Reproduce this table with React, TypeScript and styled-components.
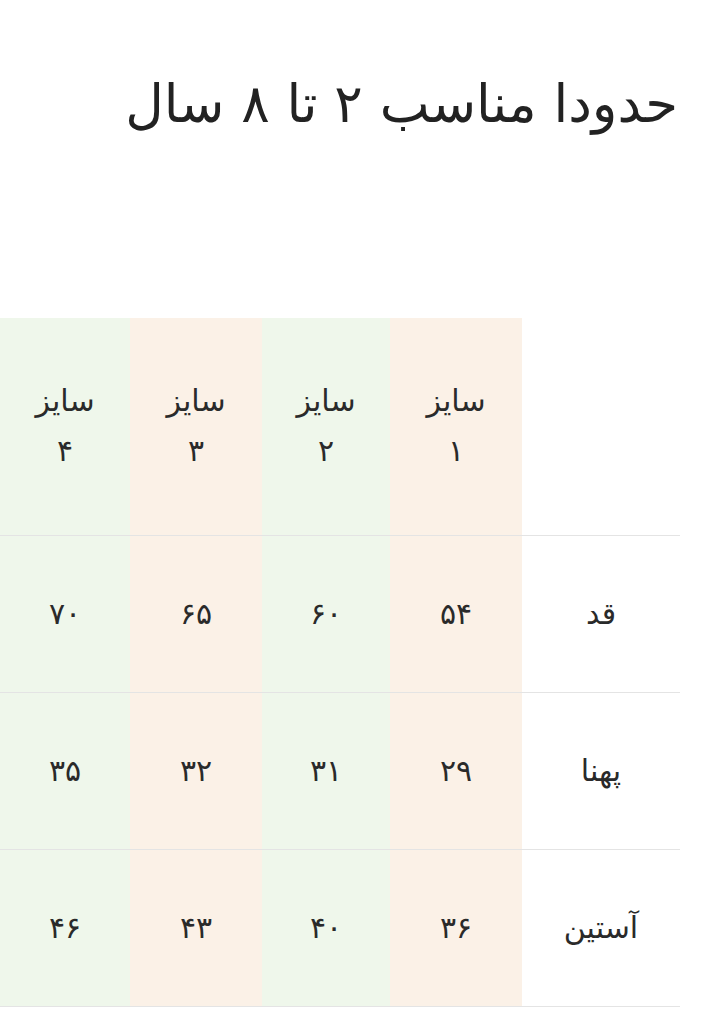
import React from "react";
import styled, { createGlobalStyle } from "styled-components";

const Global = createGlobalStyle`
  html, body { margin: 0; padding: 0; background: #ffffff; }
  body {
    direction: rtl;
    font-family: "DejaVu Sans", "Noto Sans", sans-serif;
    color: #2b2b2b;
    overflow: hidden;
  }
`;

const Page = styled.div`
  width: 720px;
  height: 1011px;
  box-sizing: border-box;
  padding-right: 40px;
  display: flex;
  flex-direction: column;
  overflow: hidden;
`;

const Title = styled.h2`
  margin: 0;
  padding: 72px 2px 0 0;
  height: 318px;
  box-sizing: border-box;
  font-size: 53px;
  font-weight: 400;
  line-height: 64px;
  color: #222222;
  text-align: right;
`;

const TableWrap = styled.div`
  width: 680px;
`;

const Table = styled.table`
  width: 680px;
  border-collapse: collapse;
  table-layout: fixed;
  direction: rtl;
`;

const Col = styled.col<{ $w: number }>`
  width: ${(p) => p.$w}px;
`;

const Row = styled.tr<{ $h: number; $line?: boolean }>`
  height: ${(p) => p.$h}px;
  border-bottom: ${(p) => (p.$line ? "1px solid #e4e4e4" : "none")};
`;

const Cell = styled.td<{ $tone: "none" | "beige" | "green" }>`
  padding: 0;
  text-align: center;
  vertical-align: middle;
  font-size: 30px;
  line-height: 50px;
  color: #2a2a2a;
  background: ${(p) =>
    p.$tone === "beige" ? "#fbf1e7" : p.$tone === "green" ? "#eff7eb" : "transparent"};
`;

const tones: Array<"beige" | "green"> = ["beige", "green", "beige", "green"];

const rows = [
  { label: "قد", values: ["۵۴", "۶۰", "۶۵", "۷۰"] },
  { label: "پهنا", values: ["۲۹", "۳۱", "۳۲", "۳۵"] },
  { label: "آستین", values: ["۳۶", "۴۰", "۴۳", "۴۶"] },
];

export default function App() {
  return (
    <Page>
      <Global />
      <Title>حدودا مناسب ۲ تا ۸ سال</Title>
      <TableWrap>
        <Table>
          <colgroup>
            <Col $w={158} />
            <Col $w={132} />
            <Col $w={128} />
            <Col $w={132} />
            <Col $w={130} />
          </colgroup>
          <tbody>
            <Row $h={217} $line>
              <Cell $tone="none" />
              {["۱", "۲", "۳", "۴"].map((n, i) => (
                <Cell key={n} $tone={tones[i]}>
                  سایز
                  <br />
                  {n}
                </Cell>
              ))}
            </Row>
            {rows.map((r) => (
              <Row key={r.label} $h={157} $line>
                <Cell $tone="none">{r.label}</Cell>
                {r.values.map((v, i) => (
                  <Cell key={i} $tone={tones[i]}>
                    {v}
                  </Cell>
                ))}
              </Row>
            ))}
          </tbody>
        </Table>
      </TableWrap>
    </Page>
  );
}
